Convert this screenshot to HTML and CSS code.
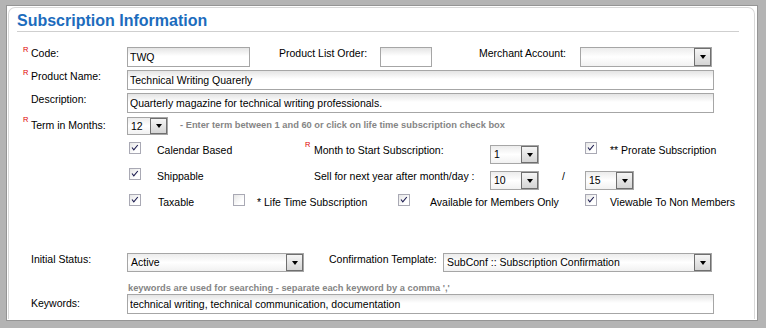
FILE: index.html
```html
<!DOCTYPE html>
<html lang="en">
<head>
    <meta charset="UTF-8">
    <title>Subscription Information</title>
    <link rel="stylesheet" href="styles.css">
</head>
<body>
    <div class="frame">
        <div class="box">
            <div class="panel">
                <h2 class="title">Subscription Information</h2>

                <div class="form">
                    <div class="row row-code">
                        <label class="lbl lbl-main"><span class="req">R</span>Code:</label>
                        <input class="input w-code" type="text" value="TWQ">
                        <label class="lbl lbl-order">Product List Order:</label>
                        <input class="input w-order" type="text" value="">
                        <label class="lbl lbl-merchant">Merchant Account:</label>
                        <div class="select w-merchant"><span class="val"></span><span class="btn"></span></div>
                    </div>

                    <div class="row row-gap">
                        <label class="lbl lbl-main"><span class="req">R</span>Product Name:</label>
                        <input class="input w-full" type="text" value="Technical Writing Quarerly">
                    </div>

                    <div class="row row-gap">
                        <label class="lbl lbl-main">Description:</label>
                        <input class="input w-full" type="text" value="Quarterly magazine for technical writing professionals.">
                    </div>

                    <div class="row row-term">
                        <label class="lbl lbl-main"><span class="req">R</span>Term in Months:</label>
                        <div class="select select-sm w-term"><span class="val">12</span><span class="btn"></span></div>
                        <span class="hint hint-term">- Enter term between 1 and 60 or click on life time subscription check box</span>
                    </div>

                    <div class="opts">
                        <!-- row: calendar -->
                        <div class="chk col-ab"><span class="cb on"><svg viewBox="0 0 10 10"><polyline points="2,4.5 3.8,6.8 7.8,2"/></svg></span><span class="txt">Calendar Based</span></div>
                        <div class="lbl opt-lbl col-cd"><span class="req">R</span>Month to Start Subscription:</div>
                        <div class="select opt-select w-month"><span class="val">1</span><span class="btn"></span></div>
                        <div class="chk chk-tight col-g"><span class="cb on"><svg viewBox="0 0 10 10"><polyline points="2,4.5 3.8,6.8 7.8,2"/></svg></span><span class="txt">** Prorate Subscription</span></div>

                        <!-- row: shippable -->
                        <div class="chk col-ab"><span class="cb on"><svg viewBox="0 0 10 10"><polyline points="2,4.5 3.8,6.8 7.8,2"/></svg></span><span class="txt">Shippable</span></div>
                        <div class="lbl opt-lbl col-cd">Sell for next year after month/day :</div>
                        <div class="select opt-select w-month"><span class="val">10</span><span class="btn"></span></div>
                        <div class="lbl slash">/</div>
                        <div class="select opt-select w-month"><span class="val">15</span><span class="btn"></span></div>

                        <!-- row: taxable -->
                        <div class="chk col-a"><span class="cb on"><svg viewBox="0 0 10 10"><polyline points="2,4.5 3.8,6.8 7.8,2"/></svg></span><span class="txt txt-wide">Taxable</span></div>
                        <div class="chk chk-narrow col-bc"><span class="cb first"></span><span class="txt">* Life Time Subscription</span></div>
                        <div class="chk chk-loose col-def"><span class="cb first on"><svg viewBox="0 0 10 10"><polyline points="2,4.5 3.8,6.8 7.8,2"/></svg></span><span class="txt">Available for Members Only</span></div>
                        <div class="chk chk-tight col-g"><span class="cb on"><svg viewBox="0 0 10 10"><polyline points="2,4.5 3.8,6.8 7.8,2"/></svg></span><span class="txt">Viewable To Non Members</span></div>
                    </div>

                    <div class="row row-status">
                        <label class="lbl lbl-main">Initial Status:</label>
                        <div class="select w-status"><span class="val">Active</span><span class="btn"></span></div>
                        <label class="lbl lbl-template">Confirmation Template:</label>
                        <div class="select w-template"><span class="val">SubConf :: Subscription Confirmation</span><span class="btn"></span></div>
                    </div>

                    <div class="hint hint-keywords">keywords are used for searching - separate each keyword by a comma ','</div>

                    <div class="row">
                        <label class="lbl lbl-main lbl-keywords">Keywords:</label>
                        <input class="input w-full" type="text" value="technical writing, technical communication, documentation">
                    </div>
                </div>
            </div>
        </div>
    </div>
</body>
</html>
```

FILE: styles.css
```css
* {
    margin: 0;
    padding: 0;
    box-sizing: border-box;
}

body {
    background: #b4b4b4;
    color: #000;
    font-family: "Liberation Sans", Arial, sans-serif;
    font-size: 10.5px;
    width: 766px;
    height: 328px;
    overflow: hidden;
}

.frame {
    height: 328px;
    padding: 5px 8px 7px 6px;
}

.box {
    height: 100%;
    background: #fff;
    border: 1px solid #959595;
    padding: 1px 2px 1px 1px;
}

.panel {
    height: 100%;
    border: 1px solid #d9d9d9;
    border-bottom: 0;
    border-radius: 7px 7px 0 0;
    padding: 3px 15px 0 8px;
}

.title {
    font-size: 16px;
    font-weight: bold;
    color: #1c6cbd;
    line-height: 20px;
    border-bottom: 1px solid #cfcfcf;
}

.form {
    padding-left: 6px;
    margin-top: 15px;
}

.row {
    display: flex;
    align-items: flex-start;
}

.row-gap {
    margin-top: 3px;
}

.row-term {
    margin-top: 4px;
}

.row-status {
    margin-top: 33px;
}

/* labels */
.lbl {
    position: relative;
    line-height: 12px;
    white-space: nowrap;
}

.lbl-main {
    width: 104px;
    padding-left: 8px;
}

.req {
    position: absolute;
    left: 0;
    top: -1px;
    color: #e00000;
    font-size: 7.5px;
    line-height: 8px;
}

.lbl-order {
    width: 101px;
    margin-left: 29px;
}

.lbl-merchant {
    width: 101px;
    margin-left: 47px;
}

.lbl-template {
    width: 114px;
    margin-left: 25px;
}

.row-term .lbl-main {
    padding-top: 2px;
}

.lbl-keywords {
    padding-top: 3px;
}

/* inputs */
.input {
    height: 20px;
    border: 1px solid #a6a6a6;
    background: linear-gradient(#e4e4e4, #fff 45%);
    font-family: inherit;
    font-size: 10.5px;
    color: #000;
    padding: 0 2px;
    outline: none;
}

.w-code { width: 123px; }
.w-order { width: 52px; }
.w-full { width: 587px; }

/* selects */
.select {
    display: flex;
    align-items: stretch;
    height: 19px;
    border: 1px solid #a6a6a6;
    background: linear-gradient(#ececec, #fff 50%, #f1f1f1);
}

.select .val {
    flex: 1;
    padding-left: 3px;
    line-height: 17px;
    white-space: nowrap;
    overflow: hidden;
}

.select .btn {
    width: 17px;
    border: 1px solid #6f6f6f;
    background: linear-gradient(#f5f5f5, #d5d5d5);
    display: flex;
    align-items: center;
    justify-content: center;
}

.select .btn::after {
    content: "";
    border-left: 3.5px solid transparent;
    border-right: 3.5px solid transparent;
    border-top: 4px solid #000;
}

.select-sm {
    height: 18px;
}

.select-sm .val {
    line-height: 16px;
}

.w-merchant { width: 132px; height: 20px; }
.w-term { width: 41px; }
.w-month { width: 49px; }
.w-status { width: 177px; }
.w-template { width: 269px; }

/* hints */
.hint {
    color: #858585;
    font-weight: bold;
    font-size: 9.3px;
    line-height: 12px;
    white-space: nowrap;
}

.hint-term {
    margin-left: 12px;
    padding-top: 2px;
}

.hint-keywords {
    margin: 11px 0 0 105px;
    line-height: 11px;
}

/* checkbox grid */
.opts {
    display: grid;
    grid-template-columns: 106px 72px 93px 92px 50px 45px 1fr;
    grid-auto-rows: 26px;
    align-items: start;
    margin: 7px 0 0 104px;
}

.col-a { grid-column: 1; }
.col-ab { grid-column: 1 / span 2; }
.col-bc { grid-column: 2 / span 2; }
.col-cd { grid-column: 3 / span 2; }
.col-def { grid-column: 4 / span 3; }
.col-g { grid-column: 7; }

.chk {
    display: flex;
    align-items: flex-start;
}

.cb {
    width: 12px;
    height: 12px;
    margin-left: 2px;
    border: 1px solid #a9a9b4;
    background: linear-gradient(135deg, #e6e6e6, #fff 70%);
}

.cb.first,
.col-g .cb {
    margin-left: 0;
}

.cb svg {
    display: block;
    width: 10px;
    height: 10px;
}

.cb polyline {
    fill: none;
    stroke: #1b1b4f;
    stroke-width: 1.1;
}

.chk .txt {
    margin-left: 16px;
    line-height: 14px;
    padding-top: 1px;
    white-space: nowrap;
}

.chk .txt-wide {
    margin-left: 17px;
}

.chk-narrow .txt { margin-left: 12px; }
.chk-tight .txt { margin-left: 13px; }
.chk-loose .txt { margin-left: 20px; }

.opt-lbl {
    padding-left: 9px;
    line-height: 14px;
    padding-top: 1px;
}

.opt-select {
    margin-top: 3px;
}

.slash {
    padding-left: 22px;
    line-height: 14px;
    padding-top: 1px;
}
```
